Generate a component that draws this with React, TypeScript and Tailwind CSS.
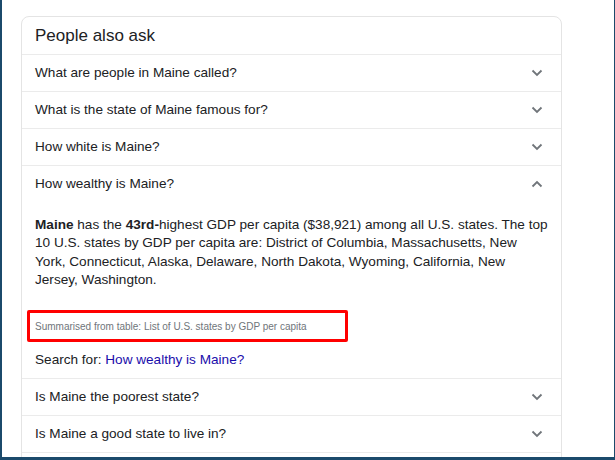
import React from "react"

const Chevron = ({ up }: { up?: boolean }) => (
    <svg width="12" height="8" viewBox="0 0 12 8" className="shrink-0">
        <path
            d={up ? "M1.5 6.5 L6 2 L10.5 6.5" : "M1.5 1.5 L6 6 L10.5 1.5"}
            fill="none"
            stroke="#70757a"
            strokeWidth="1.8"
        />
    </svg>
)

const Question = ({ text, up }: { text: string; up?: boolean }) => (
    <div className="flex items-center justify-between h-[37px] border-t border-[#ebebeb] pl-[13px] pr-[18px]">
        <span className="text-[13.6px] text-[#202124]">{text}</span>
        <Chevron up={up} />
    </div>
)

const App = () => {
    return (
        <div
            className="w-[615px] h-[460px] bg-white border-l-2 border-r border-b-[3px] border-[#1b4a6b] overflow-hidden"
            style={{ fontFamily: '"Liberation Sans", Arial, sans-serif' }}
        >
            <div className="ml-[19px] mt-[16px] w-[541px] rounded-lg border border-[#e4e4e4]">
                <div className="flex items-center h-[37px] px-[13px] text-[17px] text-[#202124]">
                    People also ask
                </div>
                <Question text="What are people in Maine called?" />
                <Question text="What is the state of Maine famous for?" />
                <Question text="How white is Maine?" />
                <Question text="How wealthy is Maine?" up />
                <div className="pl-[13px] pr-[13px] pt-[14px] pb-[9px] text-[#202124]">
                    <p className="text-[13.6px] leading-[18.3px]">
                        <b>Maine</b> has the <b>43rd-</b>highest GDP per capita ($38,921) among all U.S. states. The top
                        10 U.S. states by GDP per capita are: District of Columbia, Massachusetts, New York,
                        Connecticut, Alaska, Delaware, North Dakota, Wyoming, California, New Jersey, Washington.
                    </p>
                    <div className="mt-[21px] -ml-[8px] w-[321px] h-[32px] flex items-center border-[3px] border-[#ff0000] rounded-[2px] pl-[5px]">
                        <span className="text-[10px] text-[#70757a]">
                            Summarised from table: List of U.S. states by GDP per capita
                        </span>
                    </div>
                    <div className="mt-[9px] text-[13.6px] leading-[18px]">
                        Search for: <span className="text-[#1a0dab]">How wealthy is Maine?</span>
                    </div>
                </div>
                <Question text="Is Maine the poorest state?" />
                <Question text="Is Maine a good state to live in?" />
                <div className="h-[37px] border-t border-[#ebebeb]" />
            </div>
        </div>
    )
}

export default App
